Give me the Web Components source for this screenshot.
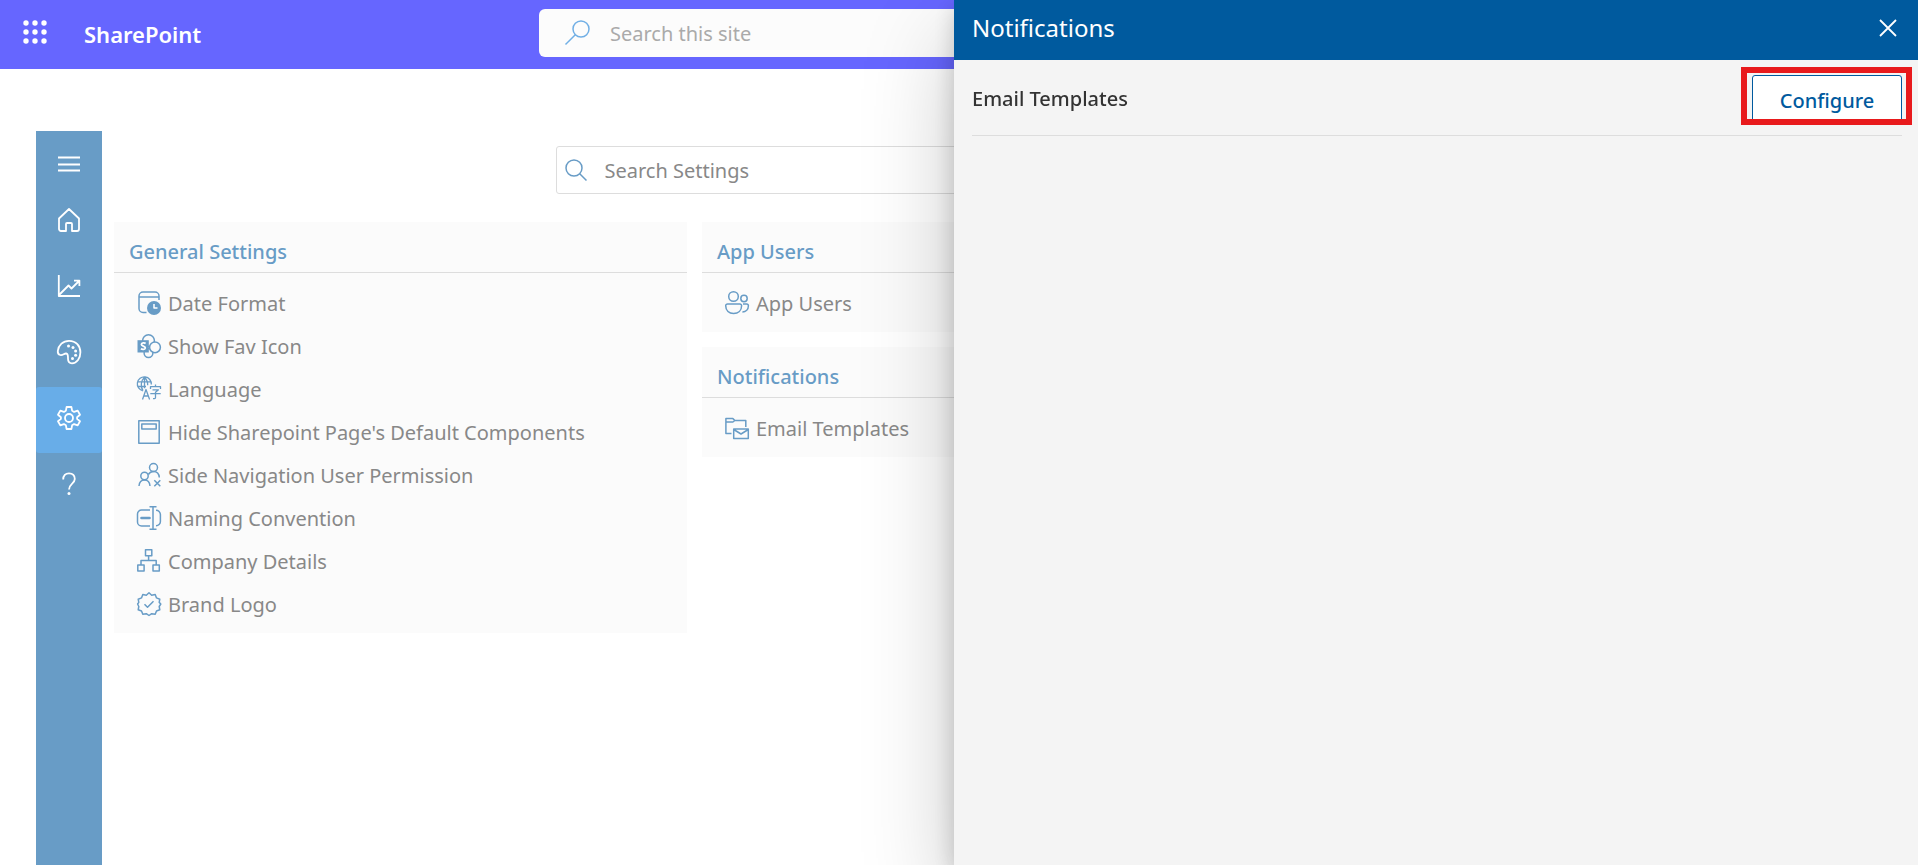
<!DOCTYPE html>
<html lang="en">
<head>
<meta charset="utf-8">
<title>SharePoint - Settings</title>
<style>
  body { margin: 0; min-height: 100vh; background: #fff; font-family: "Noto Sans", "Open Sans", sans-serif; font-size: 20px; line-height: 28px; color: #888; }
</style>
</head>
<body>
<settings-app></settings-app>
<script>
const ICONS = {
  waffle: '<g fill="currentColor" stroke="none"><circle cx="3" cy="3" r="2.7"/><circle cx="12" cy="3" r="2.7"/><circle cx="21" cy="3" r="2.7"/><circle cx="3" cy="12" r="2.7"/><circle cx="12" cy="12" r="2.7"/><circle cx="21" cy="12" r="2.7"/><circle cx="3" cy="21" r="2.7"/><circle cx="12" cy="21" r="2.7"/><circle cx="21" cy="21" r="2.7"/></g>',
  searchLeft: '<circle cx="16" cy="8" r="8"/><path d="M10.3 13.7 .5 23.5"/>',
  searchRight: '<circle cx="9" cy="10" r="8"/><path d="M14.7 15.7 21.5 22.5"/>',
  menu: '<path d="M1 5.500h22M1 12.500h22M1 18.500h22"/>',
  home: '<path d="M2 10.5 12 1l10 9.5V21a2 2 0 0 1-2 2h-5v-7a1 1 0 0 0-1-1h-4a1 1 0 0 0-1 1v7H4a2 2 0 0 1-2-2z"/>',
  chart: '<path d="M1.800 1v21H23M2 21l9.500-9.500 3 3L22 7M17 6.600h5.400V12"/>',
  palette: '<path d="M.8 11C1.500 5 6 .8 12 .8c7 0 11.400 5 11.400 11.500 0 6-3.500 11-8.400 11-3 0-4-2-4-4.500 0-2 .3-5-1.800-5.300-2-.3-3.500 2.300-6 1.500C1.200 14.500.6 13 .8 11z"/><g fill="currentColor" stroke="none"><circle cx="11.500" cy="6" r="1.500"/><circle cx="16" cy="7.500" r="1.500"/><circle cx="18.600" cy="11" r="1.500"/><circle cx="18.600" cy="15.200" r="1.500"/><circle cx="15.500" cy="18.500" r="1.500"/></g>',
  gear: '<path d="M9.600 1h4.800l.7 3.700 2 1.200 3.600-1.300L23 8.700l-2.900 2.500v1.700L23 15.300l-2.300 4.100-3.600-1.300-2 1.200-.7 3.700H9.600l-.7-3.700-2-1.200-3.600 1.300L1 15.300l2.900-2.400v-1.700L1 8.700l2.300-4.100 3.600 1.300 2-1.200z"/><circle cx="12" cy="12" r="4"/>',
  help: '<path d="M6.200 7.500C6.200 3.500 8.500 1.300 12 1.300s5.800 2.200 5.800 5.700C17.800 11.500 12 11.800 12 17.500"/><circle cx="12" cy="21.600" r="1.500" fill="currentColor" stroke="none"/>',
  close: '<path d="M1 1l16 16M17 1 1 17"/>',
  date: '<path d="M9.500 21.500H6a4 4 0 0 1-4-4V5a4 4 0 0 1 4-4h12a4 4 0 0 1 4 4v4M2 6h20"/><circle cx="17" cy="17" r="7" fill="currentColor" stroke="none"/><path d="M17 13v4h3.500" stroke="#fff"/>',
  favicon: '<g fill="#fbfbfb"><circle cx="11.500" cy="19" r="4.400"/><circle cx="11.500" cy="6.600" r="5.900"/><circle cx="18" cy="13.300" r="5.400"/></g><path d="M.5 6.200h11.300v12.300H.5z" fill="currentColor" stroke="none"/><path d="M8.600 9.500c-1-.8-4-.9-4.200.8-.2 1.900 4.100 1.600 3.900 3.700-.2 1.800-3.100 1.700-4.400.8" stroke="#fff" stroke-width="1.800"/>',
  language: '<g stroke-width="1.300"><path d="M6 13.800A7 7 0 1 1 14.300 7.500M1 4.800h13M1 9.500h8M7.500.2C3.500 4 3.500 10 6 13.700M7.500.2c2.500 2.500 3.300 5 3.200 8M7.500.2v11"/><path d="M5.500 22.500 9 12.500l3.600 10M6.800 19h4.600M13.500 12v-2.400h10V12M18.500 7.500v2M15.500 12.800h6l-3 2.500v5.200c0 1-.7 1.300-2.500 1.200M13.300 16.600h10.400"/></g>',
  page: '<path d="M1.800.8h20.400v22.400H1.800zM4.800 4h14.400v5H4.800z"/>',
  userx: '<circle cx="16.500" cy="4.500" r="4"/><circle cx="7.500" cy="13" r="3.700"/><path d="M2 23c.3-3.800 2.500-6 5.500-6s5.200 2.200 5.500 6M11.300 11.500c1.200-2 3-3 5.200-3 3.200 0 5.500 2.200 5.800 6M17.300 17.300l6 6M23.300 17.300l-6 6"/>',
  rename: '<path d="M13 4H4.500a4 4 0 0 0-4 4v8a4 4 0 0 0 4 4H13M19 4.200a4.300 4.300 0 0 1 4.400 4.300v7a4.300 4.300 0 0 1-4.400 4.300M16 .8v22.500M12.500.8h7M12.500 23.300h7"/><path d="M4.500 12h8" stroke-width="2.600" stroke-linecap="round"/>',
  org: '<path d="M8.500.8h6.300v6H8.500zM.8 16h6.300v6H.8zM16 16h6.300v6H16zM11.600 6.800v4.500M4 16v-4.500h15.200V16"/>',
  badge: '<path d="M12 .8l2.700 2.400 3.500-.6 1.300 3.300 3.300 1.300-.6 3.200L23.800 12l-1.600 2.500.6 3.300-3.300 1.200-1.300 3.300-3.500-.6L12 23.500l-2.700-1.800-3.500.6L4.500 19l-3.300-1.200.6-3.300L.6 12l1.200-1.600-.6-3.200 3.300-1.300 1.300-3.300 3.500.6z"/><path d="M7.500 12.300l3 3 6-6"/>',
  people: '<circle cx="8.500" cy="5.500" r="4.800"/><circle cx="19" cy="7.500" r="3.200"/><path d="M2.500 13h12.300a1.800 1.800 0 0 1 1.800 1.800c0 5-3.500 7.700-8 7.700s-7.900-2.700-7.900-7.700A1.800 1.800 0 0 1 2.500 13zM18 13h3.600a1.800 1.800 0 0 1 1.800 1.800c0 3.800-2.600 6.200-6 6.200"/>',
  mail: '<path d="M6.500 17.500H.9V2.600h7l2 1.900h10.900V11M.9 6h7l2-1.500"/><path d="M8.700 13h14.600v9.500H8.700zM8.700 13.500l7.300 4.500 7.300-4.500"/>'
};

const define = (name, html, setup) => {
  const template = document.createElement('template');
  template.innerHTML = html;
  customElements.define(name, class extends HTMLElement {
    constructor() {
      super();
      this.attachShadow({ mode: 'open' }).append(template.content.cloneNode(true));
    }
    connectedCallback() { if (setup) setup(this, this.shadowRoot); }
  });
};

define('ui-icon', `
  <style>
    :host { display: inline-flex; width: 24px; height: 24px; flex: none; }
    svg { display: block; width: 100%; height: 100%; overflow: visible; fill: none; stroke: currentColor; stroke-width: var(--icon-stroke, 1.5); stroke-linejoin: round; }
  </style>
  <svg viewBox="0 0 24 24" aria-hidden="true"></svg>`,
  (host, root) => { root.querySelector('svg').innerHTML = ICONS[host.getAttribute('name')]; });

define('site-header', `
  <style>
    :host { display: grid; grid-template-columns: 1fr minmax(0, 840px) 1fr; padding: 9px 0 12px; background: #66f; color: #fff; }
    .brand { display: flex; align-items: center; padding-left: 23px; gap: 37px; }
    button { display: flex; border: 0; padding: 0 0 2px; background: none; color: inherit; }
    a { padding-top: 2px; color: inherit; text-decoration: none; font-size: 22px; font-weight: 600; }
    label { display: flex; align-items: center; height: 48px; border-radius: 6px; background: #fcfcfc; padding: 0 26px; box-sizing: border-box; gap: 21px; color: #71afe5; }
    input { flex: 1; min-width: 0; border: 0; padding: 2px 0 0; background: none; font: inherit; color: #888; outline: 0; }
    input::placeholder { color: #aaa; opacity: 1; }
  </style>
  <div class="brand"><button aria-label="App launcher"><ui-icon name="waffle"></ui-icon></button><a href="#"><slot></slot></a></div>
  <label><ui-icon name="searchLeft"></ui-icon><input type="search" placeholder="Search this site" aria-label="Search this site"></label>`);

define('nav-button', `
  <style>
    :host { display: block; --icon-stroke: 1.8; }
    button { display: flex; align-items: center; justify-content: center; width: 100%; height: 66px; border: 0; border-radius: 3px; padding: 0 0 4px; background: none; color: #fff; }
    :host([active]) button { background: #68ade8; }
    :host([compact]) button { height: 46px; }
  </style>
  <button><ui-icon></ui-icon></button>`,
  (host, root) => {
    root.querySelector('button').setAttribute('aria-label', host.getAttribute('label'));
    const icon = document.createElement('ui-icon');
    icon.setAttribute('name', host.getAttribute('icon'));
    root.querySelector('ui-icon').replaceWith(icon);
  });

define('side-nav', `
  <style>
    :host { display: block; }
    nav { display: flex; flex-direction: column; height: 100%; padding-top: 12px; box-sizing: border-box; background: #689cc6; }
  </style>
  <nav aria-label="Main"><slot></slot></nav>`);

define('settings-search', `
  <style>
    :host { display: block; }
    label { display: flex; align-items: center; height: 48px; box-sizing: border-box; border: 1px solid #ddd; border-radius: 3px; padding: 0 8px; gap: 16px; background: #fff; color: #689cc6; }
    input { flex: 1; min-width: 0; border: 0; padding: 2px 0 0; background: none; font: inherit; outline: 0; }
    input::placeholder { color: #888; opacity: 1; }
  </style>
  <label><ui-icon name="searchRight"></ui-icon><input type="search" placeholder="Search Settings" aria-label="Search Settings"></label>`);

define('settings-card', `
  <style>
    :host { display: block; background: #fbfbfb; padding-bottom: 7px; }
    h2 { display: flex; align-items: center; height: 51px; padding: 10px 15px 0; box-sizing: border-box; margin: 0 0 9px; border-bottom: 1px solid #ddd; font-size: 20px; font-weight: 500; color: #689cc6; }
  </style>
  <h2></h2><slot></slot>`,
  (host, root) => { root.querySelector('h2').textContent = host.getAttribute('heading'); });

define('settings-item', `
  <style>
    :host { display: block; }
    a { display: flex; align-items: center; gap: 7px; height: 43px; padding: 0 23px; color: #888; text-decoration: none; white-space: nowrap; }
    ui-icon { color: #689cc6; padding-bottom: 2px; }
  </style>
  <a href="#"><slot></slot></a>`,
  (host, root) => {
    const icon = document.createElement('ui-icon');
    icon.setAttribute('name', host.getAttribute('icon'));
    root.querySelector('a').prepend(icon);
  });

define('side-panel', `
  <style>
    :host { display: block; position: fixed; top: 0; right: 0; bottom: 0; width: min(964px, 100vw); background: #f4f4f4; color: #333; box-shadow: 0 38px 86px rgba(0,0,0,.22), 0 7px 22px rgba(0,0,0,.18); }
    header { display: flex; align-items: center; justify-content: space-between; height: 60px; padding: 0 21px 4px 18px; box-sizing: border-box; background: #005a9e; color: #fff; --icon-stroke: 1.8; }
    h1 { margin: 0; font-size: 24px; line-height: 32px; font-weight: 400; }
    button { display: flex; border: 0; padding: 0; width: 18px; height: 18px; background: none; color: #fff; }
    .body { padding: 15px 16px 0 18px; }
  </style>
  <header><h1></h1><button aria-label="Close"><ui-icon name="close"></ui-icon></button></header>
  <div class="body"><slot></slot></div>`,
  (host, root) => { root.querySelector('h1').textContent = host.getAttribute('heading'); });

define('panel-row', `
  <style>
    :host { display: flex; align-items: flex-start; justify-content: space-between; padding-bottom: 10px; border-bottom: 1px solid #ddd; }
    .label { padding-top: 10px; font-weight: 500; }
    .action { position: relative; }
    .action::after { content: ""; position: absolute; inset: -8px -10px 0 -11px; border: 6px solid #e81a1c; pointer-events: none; }
    button { display: block; width: 150px; height: 50px; border: 1px solid #005a9e; border-radius: 3px; padding: 2px 0 0; background: #fff; color: #005a9e; font: inherit; font-weight: 500; }
  </style>
  <span class="label"><slot></slot></span>
  <div class="action"><button><slot name="action"></slot></button></div>`);

define('settings-app', `
  <style>
    :host { display: flex; flex-direction: column; min-height: 100vh; }
    .page { flex: 1; display: grid; grid-template-columns: 66px minmax(0, 1fr); gap: 12px; padding: 62px 55px 0 36px; }
    main { padding-top: 15px; }
    settings-search { width: 866px; max-width: 100%; margin: 0 auto 28px; }
    .cards { display: grid; grid-template-columns: repeat(3, minmax(0, 1fr)); gap: 15px; align-items: start; }
    .stack { display: grid; gap: 15px; }
  </style>
  <site-header>SharePoint</site-header>
  <div class="page">
    <side-nav>
      <nav-button compact icon="menu" label="Menu"></nav-button>
      <nav-button icon="home" label="Home"></nav-button>
      <nav-button icon="chart" label="Reports"></nav-button>
      <nav-button icon="palette" label="Theme"></nav-button>
      <nav-button active icon="gear" label="Settings"></nav-button>
      <nav-button icon="help" label="Help"></nav-button>
    </side-nav>
    <main>
      <settings-search></settings-search>
      <div class="cards">
        <settings-card heading="General Settings">
          <settings-item icon="date">Date Format</settings-item>
          <settings-item icon="favicon">Show Fav Icon</settings-item>
          <settings-item icon="language">Language</settings-item>
          <settings-item icon="page">Hide Sharepoint Page's Default Components</settings-item>
          <settings-item icon="userx">Side Navigation User Permission</settings-item>
          <settings-item icon="rename">Naming Convention</settings-item>
          <settings-item icon="org">Company Details</settings-item>
          <settings-item icon="badge">Brand Logo</settings-item>
        </settings-card>
        <div class="stack">
          <settings-card heading="App Users"><settings-item icon="people">App Users</settings-item></settings-card>
          <settings-card heading="Notifications"><settings-item icon="mail">Email Templates</settings-item></settings-card>
        </div>
      </div>
    </main>
  </div>
  <side-panel heading="Notifications" role="dialog" aria-label="Notifications">
    <panel-row>Email Templates<span slot="action">Configure</span></panel-row>
  </side-panel>`);
</script>
</body>
</html>
